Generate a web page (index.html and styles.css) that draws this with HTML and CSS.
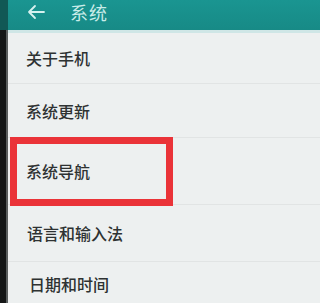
FILE: index.html
```html
<!DOCTYPE html>
<html lang="zh">
<head>
<meta charset="utf-8">
<link rel="stylesheet" href="styles.css">
</head>
<body>
<div class="screen">
  <div class="edge">
    <div class="edge-top"></div>
    <div class="edge-rest"></div>
  </div>
  <div class="main">
    <header class="appbar">
      <svg class="back" width="18" height="16" viewBox="0 0 18 16">
        <path d="M17 8H2M8 2L2 8l6 6" fill="none" stroke="#d6f1ef" stroke-width="1.8" stroke-linecap="round" stroke-linejoin="round"/>
      </svg>
      <span class="title">系统</span>
    </header>
    <div class="appbar-shade"></div>
    <ul class="list">
      <li class="row r1">关于手机</li>
      <li class="row r2">系统更新</li>
      <li class="row r3"><span class="highlight"></span>系统导航</li>
      <li class="row r4">语言和输入法</li>
      <li class="row r5">日期和时间</li>
    </ul>
  </div>
</div>
</body>
</html>
```

FILE: styles.css
```css
html, body {
  margin: 0;
  padding: 0;
  height: 100%;
  overflow: hidden;
  background: #edf0f0;
}
.screen {
  display: flex;
  height: 100%;
  overflow: hidden;
  font-family: "Noto Sans CJK SC", "Noto Sans", sans-serif;
}
.edge {
  width: 8px;
  display: flex;
  flex-direction: column;
  flex-shrink: 0;
}
.edge-top {
  height: 30px;
  background: #115855;
}
.edge-rest {
  flex: 1;
  background: linear-gradient(to right, #141616 0 6px, #5a5e5e 6px);
}
.main {
  flex: 1;
  display: flex;
  flex-direction: column;
  min-height: 0;
}
.appbar {
  height: 30px;
  box-sizing: border-box;
  flex-shrink: 0;
  background: linear-gradient(#1a9591, #178a86);
  display: flex;
  align-items: flex-start;
  padding: 2px 0 0 19px;
}
.back {
  margin-top: 2px;
}
.title {
  margin-left: 25px;
  font-size: 18px;
  line-height: 20px;
  color: #c9ece9;
  letter-spacing: 1px;
}
.appbar-shade {
  height: 3px;
  flex-shrink: 0;
  background: #cfe6e6;
}
.list {
  list-style: none;
  margin: 0;
  padding: 0;
  flex: 1;
  display: flex;
  flex-direction: column;
  min-height: 0;
}
.row {
  position: relative;
  display: flex;
  align-items: center;
  flex-shrink: 0;
  padding-left: 18px;
  font-size: 16px;
  font-weight: 500;
  color: #2e3232;
  border-bottom: 1px solid #e1e4e4;
}
.r1 { height: 50px; }
.r2 { height: 53px; }
.r3 { height: 66px; }
.r4 { height: 56px; padding-left: 19px; }
.r5 { flex: 1; min-height: 0; height: auto; padding-left: 21px; border-bottom: none; padding-top: 3px; }
.highlight {
  position: absolute;
  left: 2px;
  top: -1px;
  width: 149px;
  height: 55px;
  border: 7px solid #ea3338;
}
```
